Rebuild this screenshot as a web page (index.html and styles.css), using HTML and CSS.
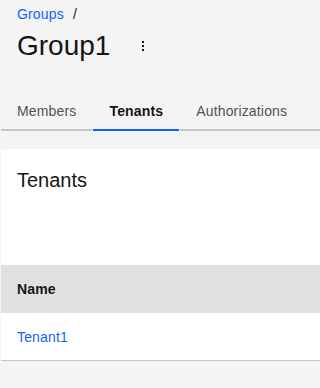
FILE: index.html
```html
<!DOCTYPE html>
<html lang="en">
<head>
<meta charset="utf-8">
<title>Group1</title>
<link rel="stylesheet" href="styles.css">
</head>
<body>
<div class="page">
  <header class="header">
    <nav class="breadcrumb">
      <a class="crumb-link" href="#">Groups</a><span class="crumb-sep">/</span>
    </nav>
    <div class="title-row">
      <h1 class="title">Group1</h1>
      <button class="overflow-btn" aria-label="Options">
        <svg width="16" height="16" viewBox="0 0 32 32" fill="#161616">
          <rect x="14" y="6" width="4" height="4"/>
          <rect x="14" y="14" width="4" height="4"/>
          <rect x="14" y="22" width="4" height="4"/>
        </svg>
      </button>
    </div>
  </header>
  <div class="tabs">
    <div class="tab">Members</div>
    <div class="tab tab-active">Tenants</div>
    <div class="tab tab-last">Authorizations</div>
  </div>
  <section class="card">
    <h2 class="card-title">Tenants</h2>
    <div class="table">
      <div class="table-head">Name</div>
      <div class="table-row"><a class="row-link" href="#">Tenant1</a></div>
    </div>
  </section>
</div>
</body>
</html>
```
FILE: styles.css
```css
html, body {
  margin: 0;
  padding: 0;
  background: #f4f4f4;
}
body {
  font-family: "Liberation Sans", Arial, sans-serif;
  color: #161616;
  overflow: hidden;
}
.page {
  margin-left: 1px;
}
.header {
  padding: 5px 16px 0 16px;
}
.breadcrumb {
  font-size: 14px;
  line-height: 18px;
  letter-spacing: 0.16px;
  display: flex;
}
.crumb-link {
  color: #0f62fe;
  text-decoration: none;
}
.crumb-sep {
  margin-left: 9px;
  color: #161616;
}
.title-row {
  display: flex;
  align-items: center;
  margin-top: 5px;
}
.title {
  margin: 0;
  font-size: 28px;
  line-height: 36px;
  font-weight: 400;
}
.overflow-btn {
  margin-left: 17px;
  width: 32px;
  height: 32px;
  padding: 0;
  border: 0;
  background: transparent;
  display: flex;
  align-items: center;
  justify-content: center;
}
.tabs {
  display: flex;
  gap: 1px;
  margin-top: 25px;
}
.tab {
  padding: 13px 16px 9px 16px;
  font-size: 14px;
  line-height: 18px;
  letter-spacing: 0.16px;
  color: #525252;
  border-bottom: 2px solid #c6c6c6;
  white-space: nowrap;
}
.tab-active {
  color: #161616;
  font-weight: 700;
  border-bottom-color: #0f62fe;
}
.tab-last {
  flex: 1;
}
.card {
  margin-top: 18px;
  background: #ffffff;
}
.card-title {
  margin: 0;
  padding: 17px 16px 71px 16px;
  font-size: 20px;
  line-height: 28px;
  font-weight: 400;
}
.table-head {
  height: 48px;
  background: #e0e0e0;
  display: flex;
  align-items: center;
  padding: 0 16px;
  font-size: 14px;
  line-height: 18px;
  font-weight: 700;
  letter-spacing: 0.16px;
}
.table-row {
  height: 47px;
  display: flex;
  align-items: center;
  padding: 0 16px;
  border-bottom: 1px solid #c6c6c6;
  font-size: 14px;
  line-height: 18px;
  letter-spacing: 0.16px;
}
.row-link {
  color: #0f62fe;
  text-decoration: none;
}
```
